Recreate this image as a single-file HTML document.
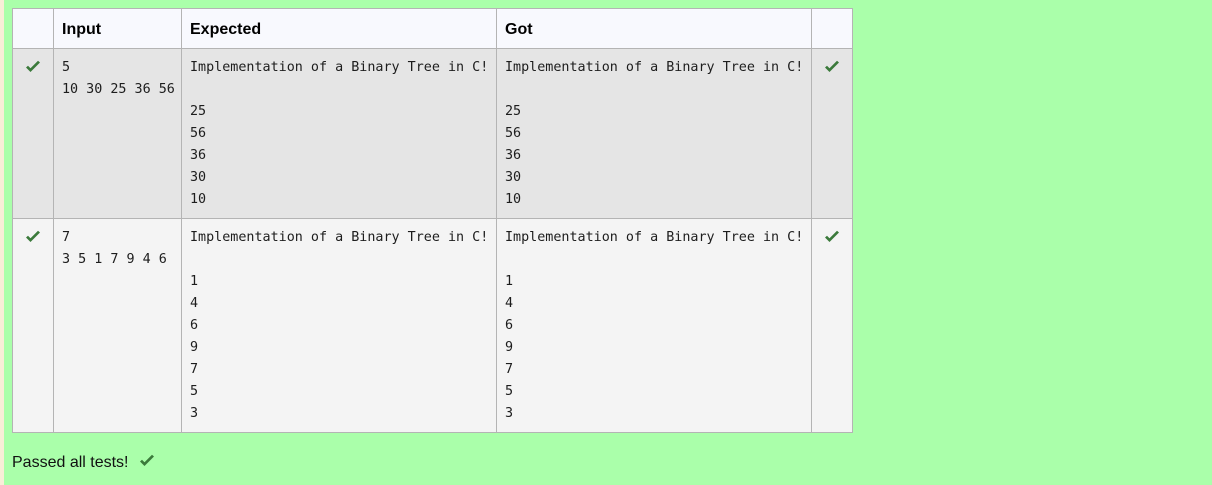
<!DOCTYPE html>
<html><head><style>
html,body{margin:0;padding:0;width:1212px;height:485px;overflow:hidden;}
body{background:#aaffaa;font-family:"Liberation Sans","DejaVu Sans",sans-serif;position:relative;}
.strip{position:absolute;left:0;top:0;width:4px;height:485px;background:#f8eed8;}
table{position:absolute;left:12px;top:8px;border-collapse:collapse;table-layout:fixed;width:840px;}
td,th{border:1px solid #b4b4b4;vertical-align:top;padding:8px 8px 7px 8px;}
th{background:#f8f9fe;height:23px;text-align:left;font-size:16px;font-weight:bold;padding:12px 8px 4px;color:#000;}
tr.r1 td{background:#e5e5e5;}
tr.r2 td{background:#f4f4f4;}
pre{margin:0;font-family:"DejaVu Sans Mono","Liberation Mono",monospace;font-size:13.4px;line-height:22px;color:#1d1d1d;}
.ck{text-align:center;padding-top:11px;}
.pass{position:absolute;left:12px;top:454px;font-size:16px;color:#111;}
</style></head><body>
<div class="strip"></div>
<table>
<colgroup><col style="width:41px"><col style="width:128px"><col style="width:315px"><col style="width:315px"><col style="width:41px"></colgroup>
<tr><th></th><th>Input</th><th>Expected</th><th>Got</th><th></th></tr>
<tr class="r1" style="height:170px"><td class="ck"><svg width="16" height="14" viewBox="0 0 16 14"><path d="M1 7.5 L5.5 12 L15 2.5 L13 0.8 L5.5 8.3 L3 5.8 Z" fill="#3b7a3b"/></svg></td><td><pre>5
10 30 25 36 56</pre></td><td><pre>Implementation of a Binary Tree in C!

25
56
36
30
10</pre></td><td><pre>Implementation of a Binary Tree in C!

25
56
36
30
10</pre></td><td class="ck"><svg width="16" height="14" viewBox="0 0 16 14"><path d="M1 7.5 L5.5 12 L15 2.5 L13 0.8 L5.5 8.3 L3 5.8 Z" fill="#3b7a3b"/></svg></td></tr>
<tr class="r2" style="height:211px"><td class="ck"><svg width="16" height="14" viewBox="0 0 16 14"><path d="M1 7.5 L5.5 12 L15 2.5 L13 0.8 L5.5 8.3 L3 5.8 Z" fill="#3b7a3b"/></svg></td><td><pre>7
3 5 1 7 9 4 6</pre></td><td><pre>Implementation of a Binary Tree in C!

1
4
6
9
7
5
3</pre></td><td><pre>Implementation of a Binary Tree in C!

1
4
6
9
7
5
3</pre></td><td class="ck"><svg width="16" height="14" viewBox="0 0 16 14"><path d="M1 7.5 L5.5 12 L15 2.5 L13 0.8 L5.5 8.3 L3 5.8 Z" fill="#3b7a3b"/></svg></td></tr>
</table>
<div class="pass">Passed all tests! <svg style="margin-left:6px;vertical-align:-1px" width="16" height="14" viewBox="0 0 16 14"><path d="M1 7.5 L5.5 12 L15 2.5 L13 0.8 L5.5 8.3 L3 5.8 Z" fill="#3b7a3b"/></svg></div>
</body></html>
